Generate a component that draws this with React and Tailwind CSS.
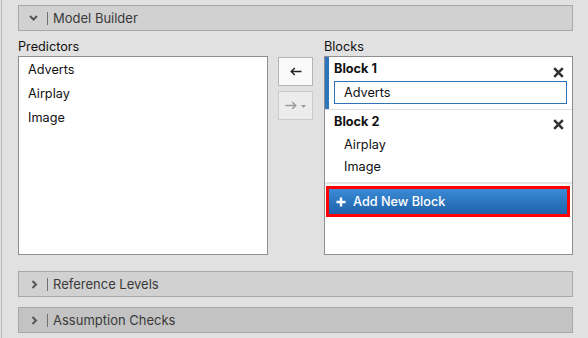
const Chevron = ({ open }) =>
  open ? (
    <svg width="9" height="6" viewBox="0 0 9 6">
      <path d="M1 1 L4.5 4.5 L8 1" fill="none" stroke="#555" strokeWidth="2" />
    </svg>
  ) : (
    <svg width="7" height="9" viewBox="0 0 7 9" className="ml-[2px]">
      <path d="M1.5 1 L5 4.5 L1.5 8" fill="none" stroke="#555" strokeWidth="2" />
    </svg>
  );

function Section({ title, open, dark, className = '' }) {
  return (
    <div
      className={`flex h-[26px] items-center border border-[#a8a8a8] ${dark ? 'bg-[#c3c3c3]' : 'bg-[#d1d1d1]'} ${className}`}
    >
      <div className="ml-[10px] flex w-[18px] items-center">
        <Chevron open={open} />
      </div>
      <div className="h-[13px] w-px bg-[#707070]" />
      <span className="ml-[5px] text-[13px] leading-4 text-[#3a3a3a]">{title}</span>
    </div>
  );
}

const Cross = ({ className = '' }) => (
  <svg width="11" height="11" viewBox="0 0 11 11" className={className}>
    <path d="M1.2 1.2 L9.8 9.8 M9.8 1.2 L1.2 9.8" stroke="#333" strokeWidth="2.6" />
  </svg>
);

export default function App() {
  return (
    <div className="flex h-[338px] w-[588px] bg-[#e1e1e1] font-['Inter',sans-serif] text-[12.7px] text-[#111]">
      <div className="ml-px w-px bg-[#b9b9b9]" />
      <div className="flex-1 pl-4 pr-[15px] pt-[5px]">
        <Section title="Model Builder" open />

        <div className="mt-[8px] flex">
          <div className="w-[250px]">
            <p className="mb-px leading-4">Predictors</p>
            <div className="h-[199px] border border-[#8e8e8e] bg-white pl-[9px] pt-px">
              <p className="leading-6">Adverts</p>
              <p className="leading-6">Airplay</p>
              <p className="leading-6">Image</p>
            </div>
          </div>

          <div className="ml-[10px] flex w-[35px] flex-col gap-[5px] pt-[18px]">
            <button className="flex h-[29px] items-center justify-center border border-[#b4b4b4] bg-[#fafafa]">
              <svg width="12" height="9" viewBox="0 0 12 9">
                <path d="M11.5 4.5 H1.2 M4.8 1 L1.2 4.5 L4.8 8" fill="none" stroke="#222" strokeWidth="1.4" />
              </svg>
            </button>
            <button className="flex h-[29px] items-center justify-center gap-[4px] border border-[#cbcbcb] bg-[#ececec]">
              <svg width="12" height="9" viewBox="0 0 12 9">
                <path d="M0.5 4.5 H10.8 M7.2 1 L10.8 4.5 L7.2 8" fill="none" stroke="#9a9a9a" strokeWidth="1.4" />
              </svg>
              <svg width="5" height="3" viewBox="0 0 5 3" className="mt-[2px]">
                <path d="M0 0 H5 L2.5 3 Z" fill="#9a9a9a" />
              </svg>
            </button>
          </div>

          <div className="ml-[11px] w-[249px]">
            <p className="mb-px leading-4">Blocks</p>
            <div className="flex h-[199px] flex-col border border-[#8e8e8e] bg-white">
              <div className="border-l-4 border-[#2d75bd] px-[5px] pb-[5px] pt-[4px]">
                <div className="flex h-4 items-start justify-between">
                  <span className="font-bold leading-4">Block 1</span>
                  <Cross className="mr-[3px] mt-[6px]" />
                </div>
                <div className="mt-[4px] flex h-[23px] items-center border border-[#2f73b6] pl-[9px]">
                  Adverts
                </div>
              </div>
              <div className="h-px bg-[#e2e2e2]" />
              <div className="pb-[4px] pl-[9px] pr-[5px] pt-[4px]">
                <div className="flex h-4 items-start justify-between">
                  <span className="font-bold leading-4">Block 2</span>
                  <Cross className="mr-[3px] mt-[5px]" />
                </div>
                <div className="mt-[4px] pl-[10px]">
                  <p className="leading-[22px]">Airplay</p>
                  <p className="leading-[22px]">Image</p>
                </div>
              </div>
              <div className="h-[2px] bg-[#e4e4e4]" />
              <div className="ml-px mr-[2px] mt-[2px] border-[3px] border-[#ff0000]">
                <div className="flex h-[25px] items-center gap-[7px] bg-linear-to-b from-[#3a8bd8] to-[#1f62a8] pl-[7px] text-white">
                  <svg width="10" height="10" viewBox="0 0 10 10">
                    <path d="M5 0.5 V9.5 M0.5 5 H9.5" stroke="#fff" strokeWidth="2.4" />
                  </svg>
                  <span className="font-medium leading-4">Add New Block</span>
                </div>
              </div>
            </div>
          </div>
        </div>

        <Section title="Reference Levels" className="mt-[16px]" />
        <Section title="Assumption Checks" dark className="mt-[10px]" />
      </div>
    </div>
  );
}
